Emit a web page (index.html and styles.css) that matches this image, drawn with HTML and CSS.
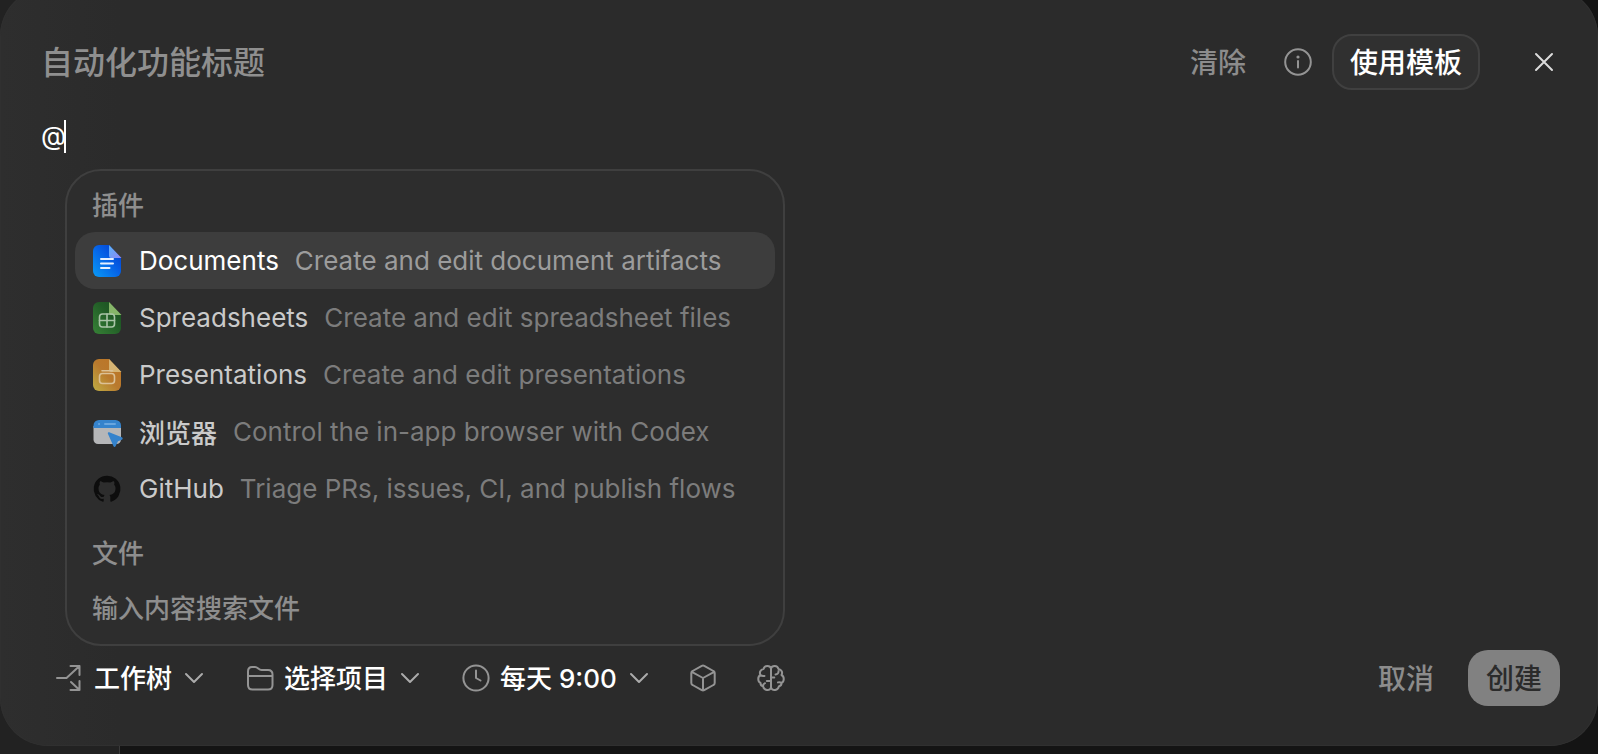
FILE: index.html
```html
<!DOCTYPE html>
<html lang="zh-CN">
<head>
  <meta charset="utf-8">
  <title>自动化功能</title>
  <link rel="stylesheet" href="styles.css">
</head>
<body>
<form class="dialog">
  <header class="header">
    <input class="title" type="text" placeholder="自动化功能标题" aria-label="自动化功能标题">
    <button class="text-button" type="button">清除</button>
    <button class="icon-button info" type="button" aria-label="信息">
      <svg class="icon" viewBox="0 0 28 28"><circle cx="14" cy="14" r="12.8"/><path d="M14 13v6.5"/><circle class="dot" cx="14" cy="9" r="1.6"/></svg>
    </button>
    <button class="template" type="button">使用模板</button>
    <button class="icon-button close" type="button" aria-label="关闭">
      <svg class="icon" viewBox="0 0 28 28"><path d="M6 6l16 16M22 6L6 22"/></svg>
    </button>
  </header>

  <div class="editor">
    <textarea class="prompt" aria-label="提示词">@</textarea>
    <span class="caret"></span>

    <div class="menu">
      <h2 class="menu-title">插件</h2>
      <ul class="menu-list">
        <li>
          <button class="item active" type="button">
            <svg class="app" viewBox="0 0 32 32">
              <defs>
                <linearGradient id="doc" x1="0" y1="1" x2="1" y2="0"><stop offset="0" stop-color="#0a9bf5"/><stop offset=".55" stop-color="#0560e6"/><stop offset="1" stop-color="#0338c8"/></linearGradient>
                <linearGradient id="docfold" x1="0" y1="0" x2="1" y2="1"><stop offset="0" stop-color="#58b4fb"/><stop offset="1" stop-color="#8f86f2"/></linearGradient>
              </defs>
              <path fill="url(#doc)" d="M8 0h10l12 13v13a6 6 0 0 1-6 6H8a6 6 0 0 1-6-6V6a6 6 0 0 1 6-6z"/>
              <path fill="url(#docfold)" d="M18 0l12.500 13H20a2 2 0 0 1-2-2z"/>
              <path class="glyph" stroke="#e4f0ff" d="M10 14h12M10 18.500h12M10 23h8.500"/>
            </svg>
            <span class="name">Documents</span>
            <span class="desc">Create and edit document artifacts</span>
          </button>
        </li>
        <li>
          <button class="item" type="button">
            <svg class="app" viewBox="0 0 32 32">
              <defs>
                <linearGradient id="sheet" x1="0" y1="1" x2="1" y2="0"><stop offset="0" stop-color="#378237"/><stop offset=".6" stop-color="#215c26"/><stop offset="1" stop-color="#1b4d22"/></linearGradient>
              </defs>
              <path fill="url(#sheet)" d="M8 0h10l12 13v13a6 6 0 0 1-6 6H8a6 6 0 0 1-6-6V6a6 6 0 0 1 6-6z"/>
              <path fill="#86b569" d="M18 0l12.500 13H20a2 2 0 0 1-2-2z"/>
              <g class="glyph thin" stroke="#a9c4a7"><rect x="8.500" y="12" width="15" height="13" rx="3"/><path d="M8.500 18.500h15M16 12v13"/></g>
            </svg>
            <span class="name">Spreadsheets</span>
            <span class="desc">Create and edit spreadsheet files</span>
          </button>
        </li>
        <li>
          <button class="item" type="button">
            <svg class="app" viewBox="0 0 32 32">
              <defs>
                <linearGradient id="slide" x1="0" y1="1" x2="1" y2="0"><stop offset="0" stop-color="#bfae45"/><stop offset=".5" stop-color="#b9792d"/><stop offset="1" stop-color="#bd7524"/></linearGradient>
              </defs>
              <path fill="url(#slide)" d="M8 0h10l12 13v13a6 6 0 0 1-6 6H8a6 6 0 0 1-6-6V6a6 6 0 0 1 6-6z"/>
              <path fill="#d5b373" d="M18 0l12.500 13H20a2 2 0 0 1-2-2z"/>
              <g class="glyph thin" stroke="#dcc196"><rect x="8.500" y="14.500" width="15" height="10" rx="3"/><path d="M11 11.800h10.500"/></g>
            </svg>
            <span class="name">Presentations</span>
            <span class="desc">Create and edit presentations</span>
          </button>
        </li>
        <li>
          <button class="item" type="button">
            <svg class="app" viewBox="0 0 32 32">
              <path fill="#b5b6b8" d="M2.500 10h27.500v13.500a4.500 4.500 0 0 1-4.500 4.500H7a4.500 4.500 0 0 1-4.500-4.500z"/>
              <path fill="#3583cc" d="M8 4h16.500a5.500 5.500 0 0 1 5.500 5.500V12H2.500V9.500A5.500 5.500 0 0 1 8 4z"/>
              <path fill="none" stroke="#69a6df" stroke-width="2" stroke-linecap="round" d="M8 8h.1M14 8h10"/>
              <path fill="#3583cc" d="M18.200 16.300l12.600 5c1.200.5 1.200 1.900 0 2.400l-3.800 1.500-2.300 4.900c-.5 1.200-1.900 1.100-2.300-.1l-5.500-12.300c-.4-1 .4-1.800 1.300-1.500z"/>
            </svg>
            <span class="name cjk">浏览器</span>
            <span class="desc">Control the in-app browser with Codex</span>
          </button>
        </li>
        <li>
          <button class="item" type="button">
            <svg class="app" viewBox="-1 -1 18 18">
              <path fill="#0d0d0d" d="M8 .5a7.500 7.500 0 0 0-2.370 14.620c.37.070.51-.16.51-.36v-1.260c-2.090.45-2.530-1-2.530-1-.34-.87-.83-1.100-.83-1.100-.68-.47.050-.46.050-.46.750.050 1.150.77 1.150.77.67 1.150 1.760.82 2.190.63.070-.49.260-.82.480-1-1.670-.19-3.420-.84-3.420-3.710 0-.82.290-1.490.770-2.010-.080-.19-.33-.95.070-1.990 0 0 .63-.2 2.060.77a7.200 7.200 0 0 1 3.760 0c1.430-.97 2.060-.77 2.060-.77.41 1.040.15 1.800.070 1.990.48.520.77 1.190.77 2.010 0 2.880-1.760 3.510-3.430 3.700.27.230.51.690.51 1.390v2.060c0 .2.140.44.520.36A7.500 7.500 0 0 0 8 .5z"/>
            </svg>
            <span class="name">GitHub</span>
            <span class="desc">Triage PRs, issues, CI, and publish flows</span>
          </button>
        </li>
      </ul>
      <h2 class="menu-title files">文件</h2>
      <p class="menu-hint">输入内容搜索文件</p>
    </div>
  </div>

  <footer class="footer">
    <label class="picker">
      <svg class="icon" viewBox="0 0 28 28"><path d="M1 14h9.500L23.500 2M14.500 2h9v9M15 18l8.500 8M14.500 26h9v-9"/></svg>
      <select aria-label="运行位置"><option>工作树</option></select>
      <svg class="chevron" viewBox="0 0 20 20"><path d="M2 6l8 8 8-8"/></svg>
    </label>
    <label class="picker">
      <svg class="icon" viewBox="0 0 28 28"><path d="M2 21V7.500C2 4.500 3.500 3 6 3h3c3 0 3.500 3 6.500 3H22c3 0 4.500 1.500 4.500 4.500V21c0 3-1.500 4.500-4.500 4.500H6.500C3.500 25.500 2 24 2 21zM2 12h24.500"/></svg>
      <select aria-label="项目"><option>选择项目</option></select>
      <svg class="chevron" viewBox="0 0 20 20"><path d="M2 6l8 8 8-8"/></svg>
    </label>
    <label class="picker">
      <svg class="icon" viewBox="0 0 28 28"><circle cx="14" cy="14" r="12.600"/><path d="M14 6.500V14l4.500 2.500"/></svg>
      <select aria-label="时间"><option>每天 9:00</option></select>
      <svg class="chevron" viewBox="0 0 20 20"><path d="M2 6l8 8 8-8"/></svg>
    </label>
    <button class="icon-button" type="button" aria-label="模型">
      <svg class="icon" viewBox="0 0 28 28"><path d="M12.800 1.800a2.600 2.600 0 0 1 2.400 0l9.200 5.200a2.400 2.400 0 0 1 1.300 2.100v9.800a2.400 2.400 0 0 1-1.300 2.100l-9.200 5.200a2.600 2.600 0 0 1-2.400 0L3.600 21a2.400 2.400 0 0 1-1.300-2.100V9.100A2.400 2.400 0 0 1 3.600 7zM2.800 7.800L14 14l11.200-6.200M14 14v12.300"/></svg>
    </button>
    <button class="icon-button" type="button" aria-label="推理强度">
      <svg class="icon" viewBox="0 0 28 28"><path d="M14 4.500C13 1 7.500 1 6.500 5 3.500 5.500 2 8.500 3.500 11 .5 12.500.5 17.500 3.500 19c0 2 1 3 2.500 3.200C7 26.500 12.500 27.500 14 23.500c1.500 4 7 3 8-1.300 1.500-.2 2.500-1.200 2.500-3.200 3-1.500 3-6.500 0-8C26 8.500 24.500 5.500 21.500 5 20.500 1 15 1 14 4.500zM14 4.500v19M3.500 11c1 .9 2.500 1.200 4 .9M9.800 17H14M14 13.500h3.300M21.500 7c.3 2-1 3.300-3 3.500M24.500 19c-1-.8-2.300-1-3.500-.6M6 22.200c.1-1.500.8-2.500 2-3"/></svg>
    </button>
    <button class="text-button cancel" type="button">取消</button>
    <button class="create" type="submit" disabled>创建</button>
  </footer>
</form>
</body>
</html>
```
FILE: styles.css
```css
* { box-sizing: border-box; }

body {
  display: flex;
  min-height: 100vh;
  margin: 0;
  overflow: hidden;
  background: linear-gradient(90deg, #222 119px, #3a3a3a 119px, #3a3a3a 120px, #141414 120px);
  color: #fff;
  font-family: Inter, "Noto Sans CJK SC", sans-serif;
  font-size: 26px;
}

button, input, select, textarea {
  margin: 0;
  padding: 0;
  border: 0;
  outline: 0;
  background: none;
  color: inherit;
  font: inherit;
}

.dialog {
  display: flex;
  flex: 1;
  flex-direction: column;
  margin: -12px 0 8px;
  padding: 46px 38px 40px 41px;
  border-radius: 48px;
  background: linear-gradient(90deg, #2e2e2e, #2b2b2b 120px);
  box-shadow: inset 0 0 0 1px #303030;
}

.icon {
  display: block;
  width: 28px;
  height: 28px;
  fill: none;
  stroke: #949494;
  stroke-width: 2;
  stroke-linecap: round;
  stroke-linejoin: round;
}
.icon .dot { fill: #949494; stroke: none; }

.header { display: flex; align-items: center; height: 56px; }
.title { flex: 1; min-width: 0; font-size: 32px; font-weight: 500; }
.title::placeholder { color: #8f8f8f; opacity: 1; }
.text-button { padding-bottom: 2px; color: #8c8c8c; font-size: 28px; font-weight: 500; }
.info { margin: 0 20px 0 38px; }
.template {
  height: 56px;
  padding: 0 16px 2px;
  border: 2px solid #404040;
  border-radius: 20px;
  background: #303030;
  font-size: 28px;
  font-weight: 500;
}
.close { margin: 0 2px 0 50px; }
.close .icon { stroke: #dcdcdc; }

.editor { position: relative; display: flex; flex: 1; margin-top: 26px; }
.prompt { flex: 1; resize: none; line-height: 40px; caret-color: transparent; }
.caret { position: absolute; top: 4px; left: 23px; width: 2px; height: 33px; background: #fff; }

.menu {
  position: absolute;
  top: 53px;
  left: 24px;
  width: 720px;
  padding: 16px 8px;
  border: 2px solid #3f3f3f;
  border-radius: 36px;
  background: #2d2d2d;
}
.menu-title, .menu-hint {
  margin: 0;
  padding: 0 17px;
  color: #8e8e8e;
  font-size: 26px;
  font-weight: 500;
  line-height: 38px;
}
.menu-title { padding-bottom: 7px; }
.files { padding-top: 18px; padding-bottom: 17px; }
.menu-list { margin: 0; padding: 0; list-style: none; }
.item {
  display: flex;
  align-items: center;
  gap: 16px;
  width: 100%;
  height: 57px;
  padding: 0 16px;
  border-radius: 20px;
  color: #cacaca;
  white-space: nowrap;
}
.item .desc { color: #7c7c7c; }
.active { background: #3d3d3d; color: #fff; }
.active .desc { color: #9c9c9c; }
.cjk { font-weight: 500; }
.app { flex: none; width: 32px; height: 32px; }
.glyph { fill: none; stroke-width: 2; stroke-linecap: round; }
.thin { stroke-width: 1.6; }

.footer { display: flex; align-items: center; gap: 42px; height: 56px; padding-left: 15px; }
.footer .icon-button { margin-left: -2px; }
.picker { display: flex; align-items: center; gap: 10px; font-weight: 500; }
.picker select { appearance: none; field-sizing: content; }
.chevron {
  width: 20px;
  height: 20px;
  margin-left: 2px;
  fill: none;
  stroke: #ababab;
  stroke-width: 2;
  stroke-linecap: round;
  stroke-linejoin: round;
}
.cancel { margin-left: auto; }
.create {
  height: 56px;
  margin-left: -8px;
  padding: 0 18px 2px;
  border-radius: 20px;
  background: #818181;
  color: #2b2b2b;
  font-size: 28px;
  font-weight: 500;
}
```
